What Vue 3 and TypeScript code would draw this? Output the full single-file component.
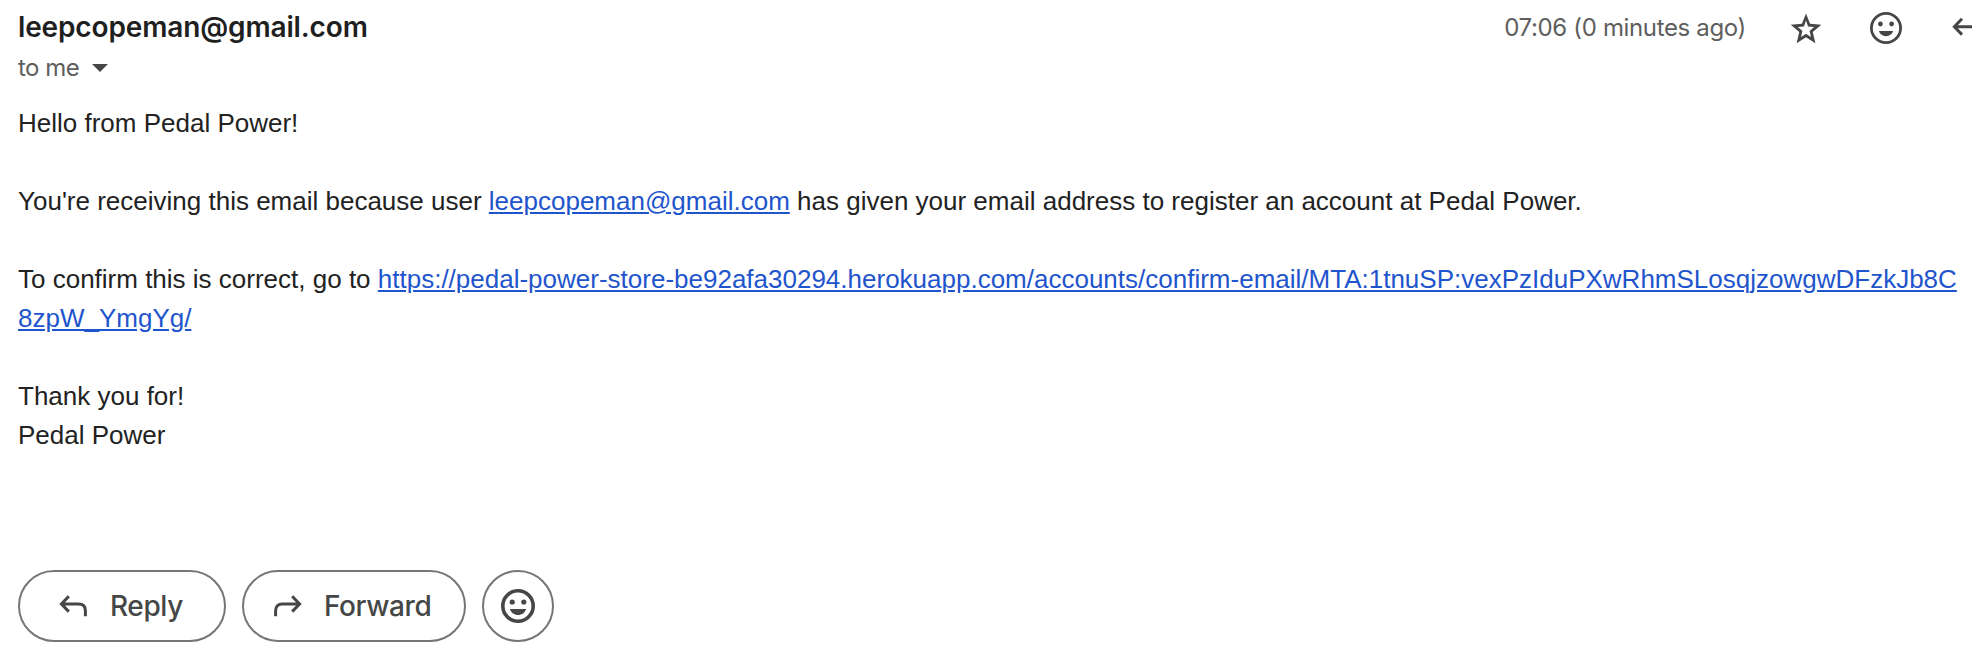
<script setup lang="ts">
const sender = 'leepcopeman@gmail.com'
const received = '07:06 (0 minutes ago)'
const confirmUrl =
  'https://pedal-power-store-be92afa30294.herokuapp.com/accounts/confirm-email/MTA:1tnuSP:vexPzIduPXwRhmSLosqjzowgwDFzkJb8C8zpW_YmgYg/'
</script>

<template>
  <main class="message">
    <header class="head">
      <div class="from">
        <div class="sender">{{ sender }}</div>
        <div class="recipient">
          <span class="to">to me</span>
          <svg class="caret" width="16" height="8" viewBox="0 0 16 8"><path d="M0 0h16l-8 8z" /></svg>
        </div>
      </div>
      <div class="tools">
        <span class="time">{{ received }}</span>
        <svg class="icon star" width="32" height="32" viewBox="0 0 32 32">
          <path fill-rule="evenodd" d="M16 1.5l4.05 10.35 11.25.9-8.55 7.3 2.65 11.1L16 25.25 6.6 31.15l2.65-11.1L.7 12.75l11.25-.9zM16 8.5l-2.1 5.9-6.1.5 4.65 4-1.45 6.1 5-3.2 5 3.2-1.45-6.1 4.65-4-6.1-.5z" />
        </svg>
        <svg class="icon mood" width="32" height="32" viewBox="0 0 32 32">
          <circle class="ring" cx="16" cy="16" r="14.6" />
          <circle cx="10.4" cy="12" r="2.4" />
          <circle cx="21.6" cy="12" r="2.4" />
          <path d="M8.8 19h14.4c-1.2 3.2-3.8 5.2-7.2 5.2S10 22.2 8.8 19z" />
        </svg>
        <svg class="icon arrow" width="30" height="24" viewBox="0 0 30 24">
          <path class="line" d="M10 2.8L2.4 10.7l7.6 7.9M2.4 10.7h19q7 0 7 7v5" />
        </svg>
      </div>
    </header>

    <article class="body">
      <p>Hello from Pedal Power!</p>
      <p>You're receiving this email because user <a>{{ sender }}</a> has given your email address to register an account at Pedal Power.</p>
      <p>To confirm this is correct, go to <a>{{ confirmUrl }}</a></p>
      <p>Thank you for!<br />Pedal Power</p>
    </article>

    <footer class="actions">
      <button class="pill reply">
        <svg class="icon" width="30" height="24" viewBox="0 0 30 24">
          <path class="line" d="M10.8 2.2L3.4 10l7.4 7.6M3.4 10h17.2q6.8 0 6.8 6.8v5.4" />
        </svg>
        <span class="reply-label">Reply</span>
      </button>
      <button class="pill forward">
        <svg class="icon" width="30" height="24" viewBox="0 0 30 24">
          <path class="line" d="M20.2 2.2l7.4 7.8-7.4 7.6M27.6 10H10.4q-6.8 0-6.8 6.8v5.4" />
        </svg>
        <span class="forward-label">Forward</span>
      </button>
      <button class="pill react">
        <svg class="icon" width="34" height="34" viewBox="0 0 34 34">
          <circle class="ring bold" cx="17" cy="17" r="15.2" />
          <circle cx="11.2" cy="13" r="2.6" />
          <circle cx="22.8" cy="13" r="2.6" />
          <path d="M8.8 20h16.4c-1.3 3.7-4.3 6-8.2 6s-6.9-2.3-8.2-6z" />
        </svg>
      </button>
    </footer>
  </main>
</template>

<style>
html,
body {
  background: #fff;
  overflow: hidden;
}
</style>

<style scoped>
.message {
  box-sizing: border-box;
  width: 1972px;
  height: 668px;
  padding: 0 14px 26px 18px;
  display: flex;
  flex-direction: column;
  overflow: hidden;
  background: #fff;
  font-family: Inter, 'Liberation Sans', sans-serif;
}
.head {
  height: 104px;
  flex: none;
  display: flex;
  justify-content: space-between;
}
.sender {
  height: 54px;
  line-height: 54px;
  font-size: 28px;
  font-weight: 600;
  letter-spacing: -0.14px;
  color: #1f1f1f;
}
.recipient {
  display: flex;
  align-items: center;
  height: 28px;
  gap: 13px;
}
.to {
  font-size: 24px;
  line-height: 28px;
  letter-spacing: -0.5px;
  color: #5e5e5e;
}
.caret {
  fill: #444746;
}
.tools {
  display: flex;
  align-items: center;
  height: 56px;
  margin-right: -24px;
}
.time {
  font-size: 24px;
  line-height: 28px;
  letter-spacing: -0.35px;
  color: #5e5e5e;
  white-space: nowrap;
  margin-right: 44px;
}
.icon {
  display: block;
  flex: none;
  fill: #444746;
}
.star {
  margin-right: 48px;
}
.mood {
  margin-right: 50px;
}
.ring {
  fill: none;
  stroke: #444746;
  stroke-width: 2.8;
}
.ring.bold {
  stroke-width: 3.6;
}
.line {
  fill: none;
  stroke: #444746;
  stroke-width: 3;
}
.body {
  font-family: 'Liberation Sans', Arial, sans-serif;
  font-size: 26px;
  line-height: 39px;
  color: #222;
}
.body p {
  margin: 0 0 39px;
  word-break: break-all;
}
.body a {
  color: #1f55cc;
  text-decoration: underline;
}
.actions {
  display: flex;
  gap: 16px;
  margin-top: auto;
}
.pill {
  box-sizing: border-box;
  height: 72px;
  margin: 0;
  padding: 0;
  display: flex;
  align-items: center;
  border: 2px solid #747775;
  border-radius: 36px;
  background: #fff;
  color: #444746;
  font-family: inherit;
  font-size: 28px;
  font-weight: 500;
  letter-spacing: -0.4px;
}
.reply {
  width: 208px;
  padding-left: 38px;
}
.forward {
  width: 224px;
  padding-left: 28px;
}
.reply-label,
.forward-label {
  margin-left: 22px;
}
.react {
  width: 72px;
  justify-content: center;
}
</style>
